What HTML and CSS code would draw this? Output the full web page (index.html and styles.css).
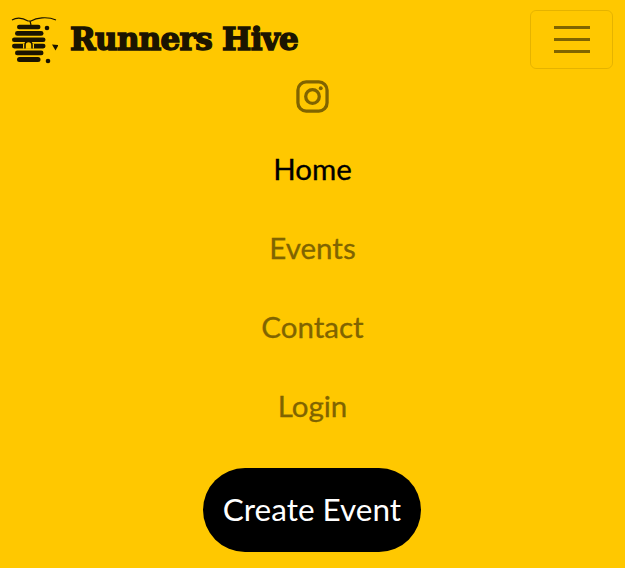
FILE: index.html
```html
<!DOCTYPE html>
<html lang="en">
<head>
  <meta charset="UTF-8" />
  <meta name="viewport" content="width=device-width, initial-scale=1.0"/>
  <title>Runners Hive</title>
  <link rel="stylesheet" href="styles.css">
</head>
<body>
  <nav class="navbar">
    <div class="navbar-top">
      <a class="brand" href="#">
        <svg class="brand-logo" width="48" height="52" viewBox="10 14 48 52">
          <path class="branch" d="M12 20 C17 17 23 18 28 21 L31 21 C36 18 47 16 56 20 M30 21 L31 25"/>
          <rect x="17" y="24.8" width="23.5" height="4.4" rx="2.2"/>
          <rect x="15" y="31" width="28.5" height="4.8" rx="2.4"/>
          <rect x="12" y="37.4" width="33.5" height="4.6" rx="2.3"/>
          <rect x="12" y="43.8" width="33.5" height="4.6" rx="2.3"/>
          <rect x="15" y="50.6" width="28.5" height="4.6" rx="2.3"/>
          <rect x="17" y="57" width="23.5" height="5" rx="2.5"/>
          <rect class="door-gap" x="23" y="43.8" width="11" height="4.8"/>
          <path class="door" d="M25 48.6 V45 C25 40.4 32 40.4 32 45 V48.6"/>
          <circle cx="47" cy="28" r="2.3"/>
          <path d="M52 44.5 L58.5 45 L55.5 50.5 Z"/>
          <circle cx="48" cy="61" r="2.3"/>
        </svg>
        <span class="brand-name">Runners Hive</span>
      </a>
      <button class="toggler" type="button" aria-label="Toggle navigation">
        <span class="toggler-bar"></span>
        <span class="toggler-bar"></span>
        <span class="toggler-bar"></span>
      </button>
    </div>
    <div class="nav-menu">
      <a class="insta" href="#" aria-label="Instagram">
        <svg width="33" height="33" viewBox="0 0 34 34">
          <rect x="2" y="2" width="30" height="30" rx="8.5" fill="none" stroke="currentColor" stroke-width="3.4"/>
          <circle cx="17" cy="17" r="7" fill="none" stroke="currentColor" stroke-width="3.4"/>
          <circle cx="25.5" cy="8.5" r="2" fill="currentColor"/>
        </svg>
      </a>
      <a class="nav-link active" href="#">Home</a>
      <a class="nav-link" href="#">Events</a>
      <a class="nav-link" href="#">Contact</a>
      <a class="nav-link" href="#">Login</a>
      <a class="create-btn" href="#">Create Event</a>
    </div>
  </nav>
</body>
</html>
```

FILE: styles.css
```css
body {
  margin: 0;
  background: #ffc800;
  font-family: "Lato", "Noto Sans", sans-serif;
}
a { text-decoration: none; }
.navbar { padding: 10px 12px 16px; }
.navbar-top {
  display: flex;
  justify-content: space-between;
  align-items: flex-start;
}
.brand {
  display: flex;
  align-items: center;
  height: 59px;
  margin-left: -2px;
  color: #1b1400;
}
.brand-logo { fill: #1b1400; flex: none; }
.branch { fill: none; stroke: #1b1400; stroke-width: 1.2; }
.door-gap { fill: #ffc800; }
.door { fill: #ffc800; stroke: #1b1400; stroke-width: 1.6; }
.brand-name {
  margin-left: 12px;
  margin-top: -2px;
  font-family: "DejaVu Serif", serif;
  font-weight: bold;
  font-size: 31px;
  letter-spacing: -0.7px;
  -webkit-text-stroke: 1.5px #1b1400;
}
.toggler {
  box-sizing: border-box;
  width: 83px;
  height: 59px;
  padding: 0;
  display: flex;
  flex-direction: column;
  justify-content: center;
  align-items: center;
  gap: 9px;
  background: transparent;
  border: 1px solid rgba(0, 0, 0, 0.1);
  border-radius: 6px;
}
.toggler-bar {
  display: block;
  width: 36px;
  height: 3px;
  background: #806400;
}
.nav-menu {
  display: flex;
  flex-direction: column;
  align-items: center;
}
.insta {
  display: flex;
  margin-top: 11px;
  margin-bottom: 16px;
  color: #806400;
}
.nav-link {
  padding: 20px 0;
  font-size: 29.5px;
  line-height: 39px;
  color: #806400;
  -webkit-text-stroke: 0.3px currentColor;
}
.nav-link.active { color: #000; }
.create-btn {
  margin-top: 23px;
  margin-right: 1px;
  width: 218px;
  height: 84px;
  line-height: 82px;
  text-align: center;
  background: #000;
  color: #fff;
  font-size: 31.5px;
  border-radius: 42px;
  white-space: nowrap;
}
```
